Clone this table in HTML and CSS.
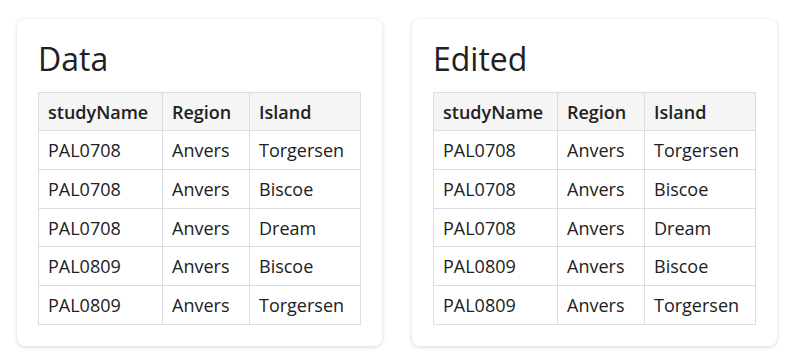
FILE: index.html
```html
<!DOCTYPE html>
<html>
<head>
<meta charset="utf-8">
<link rel="stylesheet" href="styles.css">
</head>
<body>
<div class="page">
  <div class="card">
    <h2 class="title">Data</h2>
    <table class="tbl">
      <colgroup><col class="c-name"><col class="c-region"><col class="c-island"></colgroup>
      <thead><tr><th>studyName</th><th>Region</th><th>Island</th></tr></thead>
      <tbody>
        <tr><td>PAL0708</td><td>Anvers</td><td>Torgersen</td></tr>
        <tr><td>PAL0708</td><td>Anvers</td><td>Biscoe</td></tr>
        <tr><td>PAL0708</td><td>Anvers</td><td>Dream</td></tr>
        <tr><td>PAL0809</td><td>Anvers</td><td>Biscoe</td></tr>
        <tr><td>PAL0809</td><td>Anvers</td><td>Torgersen</td></tr>
      </tbody>
    </table>
  </div>
  <div class="card">
    <h2 class="title">Edited</h2>
    <table class="tbl">
      <colgroup><col class="c-name"><col class="c-region"><col class="c-island"></colgroup>
      <thead><tr><th>studyName</th><th>Region</th><th>Island</th></tr></thead>
      <tbody>
        <tr><td>PAL0708</td><td>Anvers</td><td>Torgersen</td></tr>
        <tr><td>PAL0708</td><td>Anvers</td><td>Biscoe</td></tr>
        <tr><td>PAL0708</td><td>Anvers</td><td>Dream</td></tr>
        <tr><td>PAL0809</td><td>Anvers</td><td>Biscoe</td></tr>
        <tr><td>PAL0809</td><td>Anvers</td><td>Torgersen</td></tr>
      </tbody>
    </table>
  </div>
</div>
</body>
</html>
```

FILE: styles.css
```css
html, body {
  margin: 0;
  padding: 0;
  background: #ffffff;
}
body {
  font-family: "Open Sans", "Liberation Sans", sans-serif;
  color: #212121;
}
.page {
  display: flex;
  gap: 30px;
  padding: 19px 17px;
}
.card {
  flex: 1;
  background: #fff;
  border-radius: 8px;
  box-shadow: 0 1px 4px rgba(0,0,0,0.16);
  padding: 21px;
}
.title {
  margin: 0 0 14px 0;
  font-size: 32px;
  font-weight: 400;
  line-height: 38px;
  color: #212121;
}
.tbl {
  width: 100%;
  border-collapse: collapse;
  font-size: 18px;
}
.c-name { width: 124px; }
.c-region { width: 87px; }
.tbl th, .tbl td {
  border: 1px solid #dcdde0;
  padding: 7px 10px 5px 9px;
  line-height: 25.8px;
  text-align: left;
  white-space: nowrap;
}
.tbl th {
  line-height: 25px;
  background: #f5f5f6;
  font-weight: 600;
}
```
